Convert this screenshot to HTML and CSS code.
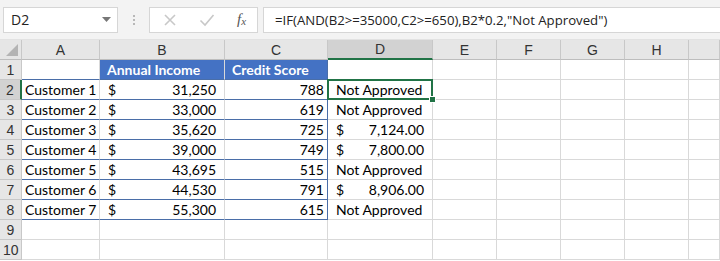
FILE: index.html
```html
<!DOCTYPE html>
<html>
<head>
    <title>Workbook</title>
    <link rel="stylesheet" href="styles.css">
</head>
<body>
    <div class="toolbar">
        <div class="namebox">
            <span>D2</span>
            <svg class="caret" width="9" height="5" viewBox="0 0 9 5"><path d="M0 0h9L4.5 5z" fill="#777"/></svg>
        </div>
        <div class="grip"><i></i><i></i><i></i></div>
        <div class="fxbox">
            <svg width="14" height="14" viewBox="0 0 14 14"><path d="M2 2l10 10M12 2L2 12" stroke="#c8c8c8" stroke-width="1.6" fill="none"/></svg>
            <svg width="16" height="14" viewBox="0 0 16 14"><path d="M1.5 7.5l4.5 4.5 8.5-10" stroke="#c8c8c8" stroke-width="1.6" fill="none"/></svg>
            <span class="fx">f<sub>x</sub></span>
        </div>
        <div class="formula">=IF(AND(B2&gt;=35000,C2&gt;=650),B2*0.2,"Not Approved")</div>
    </div>

    <table class="sheet">
        <colgroup>
            <col style="width:22px"><col style="width:78px"><col style="width:125px"><col style="width:103px"><col style="width:105px">
            <col style="width:64px"><col style="width:64px"><col style="width:64px"><col style="width:64px"><col>
        </colgroup>
        <tr class="colhead">
            <th class="corner"><svg width="12" height="12" viewBox="0 0 12 12"><path d="M12 0V12H0z" fill="#b4b4b4"/></svg></th>
            <th>A</th><th>B</th><th>C</th><th class="active">D</th><th>E</th><th>F</th><th>G</th><th>H</th><th></th>
        </tr>
        <tr>
            <th>1</th><td class="tb"></td><td class="hd tb">Annual Income</td><td class="hd tb tr">Credit Score</td><td></td><td></td><td></td><td></td><td></td><td></td>
        </tr>
        <tr>
            <th class="active">2</th><td class="tb">Customer 1</td><td class="tb acc"><span>$</span><span>31,250</span></td><td class="tb tr num">788</td>
            <td class="sel"><span class="pad">Not Approved</span><i class="handle"></i></td><td></td><td></td><td></td><td></td><td></td>
        </tr>
        <tr>
            <th>3</th><td class="tb">Customer 2</td><td class="tb acc"><span>$</span><span>33,000</span></td><td class="tb tr num">619</td>
            <td><span class="pad">Not Approved</span></td><td></td><td></td><td></td><td></td><td></td>
        </tr>
        <tr>
            <th>4</th><td class="tb">Customer 3</td><td class="tb acc"><span>$</span><span>35,620</span></td><td class="tb tr num">725</td>
            <td class="acc"><span>$</span><span>7,124.00</span></td><td></td><td></td><td></td><td></td><td></td>
        </tr>
        <tr>
            <th>5</th><td class="tb">Customer 4</td><td class="tb acc"><span>$</span><span>39,000</span></td><td class="tb tr num">749</td>
            <td class="acc"><span>$</span><span>7,800.00</span></td><td></td><td></td><td></td><td></td><td></td>
        </tr>
        <tr>
            <th>6</th><td class="tb">Customer 5</td><td class="tb acc"><span>$</span><span>43,695</span></td><td class="tb tr num">515</td>
            <td><span class="pad">Not Approved</span></td><td></td><td></td><td></td><td></td><td></td>
        </tr>
        <tr>
            <th>7</th><td class="tb">Customer 6</td><td class="tb acc"><span>$</span><span>44,530</span></td><td class="tb tr num">791</td>
            <td class="acc"><span>$</span><span>8,906.00</span></td><td></td><td></td><td></td><td></td><td></td>
        </tr>
        <tr>
            <th>8</th><td class="tb">Customer 7</td><td class="tb acc"><span>$</span><span>55,300</span></td><td class="tb tr num">615</td>
            <td><span class="pad">Not Approved</span></td><td></td><td></td><td></td><td></td><td></td>
        </tr>
        <tr>
            <th>9</th><td></td><td></td><td></td><td></td><td></td><td></td><td></td><td></td><td></td>
        </tr>
        <tr>
            <th>10</th><td></td><td></td><td></td><td></td><td></td><td></td><td></td><td></td><td></td>
        </tr>
    </table>
</body>
</html>
```

FILE: styles.css
```css
body { margin: 0; background: #fff; overflow: hidden; width: 720px; height: 261px; font-family: Lato, "Liberation Sans", sans-serif; color: #000; }

.toolbar { display: flex; align-items: center; height: 40px; background: #f3f3f3; border-bottom: 1px solid #e2e2e2; box-sizing: border-box; padding-left: 3px; }
.namebox { display: flex; align-items: center; justify-content: space-between; width: 115px; height: 26px; box-sizing: border-box; background: #fff; border: 1px solid #d6d6d6; padding: 0 6px 0 7px; font-family: "Open Sans", sans-serif; font-size: 14px; color: #222; }
.grip { display: flex; flex-direction: column; gap: 2px; margin: 0 14px 0 15px; }
.grip i { width: 2px; height: 2px; background: #b8b8b8; }
.fxbox { display: flex; align-items: center; gap: 22px; width: 109px; height: 26px; box-sizing: border-box; background: #fff; border: 1px solid #d6d6d6; padding-left: 13px; }
.fx { font-family: "Liberation Serif", serif; font-style: italic; font-size: 15px; color: #555; }
.fx sub { font-size: 11px; vertical-align: -1px; }
.formula { flex: 1; margin-left: 5px; height: 26px; box-sizing: border-box; background: #fff; border: 1px solid #d6d6d6; border-right: none; padding-left: 11px; line-height: 24px; font-family: "Open Sans", sans-serif; font-size: 13.2px; color: #222; white-space: nowrap; }

.sheet { table-layout: fixed; width: 720px; border-collapse: separate; border-spacing: 0; font-size: 14px; }
.sheet td, .sheet th { box-sizing: border-box; height: 20px; padding: 0 3px; border-right: 1px solid #d9d9d9; border-bottom: 1px solid #d9d9d9; white-space: nowrap; overflow: visible; line-height: 18px; }
.sheet th { background: #e6e6e6; font-weight: normal; color: #333; border-color: #c8c8c8; text-align: center; font-family: "Liberation Sans", sans-serif; font-size: 14px; }
.colhead th { height: 20px; border-bottom-color: #bdbdbd; }
.colhead th.active { background: #d2d2d2; border-bottom: 2px solid #217346; }
th.active { background: #d2d2d2; }
tr th.active:first-child { border-right: 2px solid #217346; }
.corner { position: relative; }
.corner svg { position: absolute; right: 3px; bottom: 3px; }

.tb { border-bottom-color: #4a6ea8 !important; }
.tr { border-right-color: #4a6ea8 !important; }
.hd { background: #4472c4; color: #fff; font-weight: bold; padding-left: 7px !important; }
.num { text-align: right; }
.acc span:first-child { float: left; padding-left: 5px; }
.acc span:last-child { float: right; padding-right: 5px; }
.pad { padding-left: 5px; }
.sel { position: relative; }
.sel::after { content: ""; position: absolute; left: -1px; top: -1px; right: -1px; bottom: -1px; border: 2px solid #217346; }
.handle { position: absolute; right: -4px; bottom: -4px; width: 5px; height: 5px; background: #217346; border: 1px solid #fff; z-index: 1; }
```
